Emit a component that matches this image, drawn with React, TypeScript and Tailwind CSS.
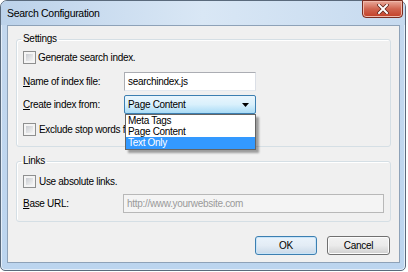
import React from "react";

function Checkbox() {
  return (
    <div className="w-[13px] h-[13px] border border-[#8e8f8f] bg-[#f4f4f4] p-[2px] shrink-0">
      <div className="w-full h-full bg-gradient-to-br from-[#c9ccd1] to-[#f4f4f4]" />
    </div>
  );
}

function Legend({ children }: { children: React.ReactNode }) {
  return <legend className="-ml-[2px] px-[2px] h-[14px] leading-[14px]">{children}</legend>;
}

function Button({ children, def }: { children: React.ReactNode; def?: boolean }) {
  return (
    <div
      className={
        "h-[19px] rounded-[3px] border flex items-center justify-center " +
        (def
          ? "w-[62px] border-[#3c7fb1] bg-gradient-to-b from-[#eaf3fb] via-[#e3ecf5] to-[#c9d9e8] shadow-[inset_0_0_0_1px_#c8e4f8]"
          : "w-[63px] border-[#707070] bg-gradient-to-b from-[#f2f2f2] via-[#ebebeb] to-[#cfcfcf] shadow-[inset_0_0_0_1px_#fcfcfc]")
      }
    >
      {children}
    </div>
  );
}

export default function App() {
  return (
    <div className="w-[408px] h-[272px] bg-white font-['Liberation_Sans',Arial,sans-serif] text-[10px] tracking-[-0.3px] text-black">
      <div className="w-[406px] h-[271px] border border-[#5a6a7c] rounded-t-[7px] rounded-b-[5px] flex flex-col bg-gradient-to-b from-[#c4d8ee] to-[#bcd5ef] shadow-[inset_0_0_0_1px_#e4eef9]">
        <div className="h-[24px] flex items-start justify-between pl-[6px] pr-[2px] bg-gradient-to-r from-[#bcd2ea] via-[#d9e7f5] to-[#c6daef] rounded-t-[6px]">
          <span className="mt-[6px] text-[10.5px] leading-[12px]">Search Configuration</span>
          <div className="-mt-[1px] w-[41px] h-[18px] rounded-b-[4px] border border-[#7a2c20] bg-gradient-to-b from-[#e9a99b] via-[#d0644f] to-[#c23f26] shadow-[inset_0_0_0_1px_#f0b9ab] flex items-center justify-center">
            <svg width="12" height="10" viewBox="0 0 12 10">
              <path d="M2 1 L10 9 M10 1 L2 9" stroke="#5a1f15" strokeWidth="3.4" strokeLinecap="square" />
              <path d="M2 1 L10 9 M10 1 L2 9" stroke="#ffffff" strokeWidth="2" strokeLinecap="square" />
            </svg>
          </div>
        </div>
        <div className="flex-1 pl-[6px] pr-[5px] pb-[7px]">
          <div className="relative h-full border border-[#8ea2b8] bg-[#f0f0f0] px-[8px] flex flex-col">
            <fieldset className="mt-[6px] border border-[#d5dfe5] rounded-[3px] pl-[6px] pr-[6px] pb-[10px] shadow-[inset_1px_1px_0_#ffffff]">
              <Legend>Settings</Legend>
              <div className="mt-[5px] h-[13px] flex items-center gap-[2px]">
                <Checkbox />
                <span>Generate search index.</span>
              </div>
              <div className="mt-[8px] h-[19px] flex items-center">
                <span className="w-[101px] shrink-0"><u>N</u>ame of index file:</span>
                <div className="w-[132px] h-[19px] border border-[#abadb3] border-b-[#e3e9ef] border-r-[#dbdfe6] bg-white flex items-center pl-[3px]">
                  searchindex.js
                </div>
              </div>
              <div className="mt-[4px] h-[19px] flex items-center">
                <span className="w-[101px] shrink-0"><u>C</u>reate index from:</span>
                <div className="w-[132px] h-[19px] border border-[#3c7fb1] rounded-[2px] bg-gradient-to-b from-[#eaf6fd] via-[#d9f0fc] to-[#a9dbf6] flex items-center justify-between pl-[3px] pr-[6px]">
                  <span>Page Content</span>
                  <svg width="7" height="4" viewBox="0 0 7 4">
                    <path d="M0 0 H7 L3.5 4 Z" fill="#000" />
                  </svg>
                </div>
              </div>
              <div className="mt-[9px] h-[13px] flex items-center gap-[3px]">
                <Checkbox />
                <span>Exclude stop words from index.</span>
              </div>
            </fieldset>
            <fieldset className="mt-[7px] border border-[#d5dfe5] rounded-[3px] pl-[6px] pr-[6px] pb-[8px] shadow-[inset_1px_1px_0_#ffffff]">
              <Legend>Links</Legend>
              <div className="mt-[7px] h-[13px] flex items-center gap-[3px]">
                <Checkbox />
                <span>Use absolute links.</span>
              </div>
              <div className="mt-[6px] h-[19px] flex items-center">
                <span className="w-[100px] shrink-0"><u>B</u>ase URL:</span>
                <div className="flex-1 h-[19px] border border-[#b8b8b8] bg-[#f4f4f4] flex items-center pl-[3px] text-[#9a9a9a]">
                  http://www.yourwebsite.com
                </div>
              </div>
            </fieldset>
            <div className="mt-[14px] flex justify-end gap-[10px] pr-[1px]">
              <Button def>OK</Button>
              <Button>Cancel</Button>
            </div>
            <div className="absolute left-[117px] top-[88px] w-[131px] border border-[#646464] bg-white shadow-[3px_3px_2px_rgba(0,0,0,0.35)] p-[0px] flex flex-col leading-[11px]">
              <div className="h-[11px] pl-[2px]">Meta Tags</div>
              <div className="h-[11px] pl-[2px]">Page Content</div>
              <div className="h-[12px] pl-[2px] bg-[#3399ff] text-white">Text Only</div>
            </div>
          </div>
        </div>
      </div>
    </div>
  );
}
